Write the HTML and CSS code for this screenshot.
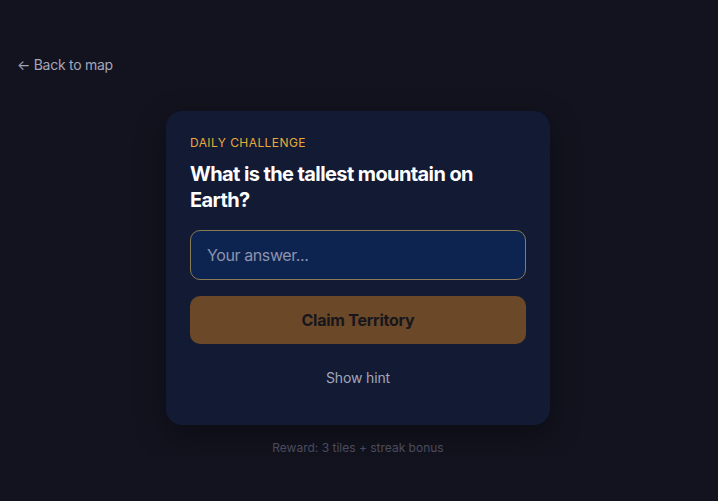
FILE: index.html
```html
<!DOCTYPE html>
<html lang="en">
<head>
    <meta charset="UTF-8">
    <meta name="viewport" content="width=device-width, initial-scale=1.0">
    <title>Daily Challenge</title>
    <link rel="stylesheet" href="styles.css">
</head>
<body>
    <nav class="top-nav">
        <a href="#" class="back-link">&larr; Back to map</a>
    </nav>
    <main class="challenge">
        <section class="challenge-card">
            <p class="challenge-label">DAILY CHALLENGE</p>
            <h2 class="challenge-question">What is the tallest mountain on Earth?</h2>
            <form id="answerForm" class="answer-form">
                <input type="text" id="answer" class="answer-input" placeholder="Your answer..." autofocus>
                <button type="submit" class="claim-btn">Claim Territory</button>
            </form>
            <button type="button" class="hint-btn">Show hint</button>
        </section>
        <p class="reward">Reward: 3 tiles + streak bonus</p>
    </main>
</body>
</html>
```

FILE: styles.css
```css
body {
    font-family: Inter, "Noto Sans", sans-serif;
    background-color: #13131f;
    color: #e8e9f0;
    margin: 0;
    padding: 0;
}

.top-nav {
    padding: 54px 17px 0;
}

.back-link {
    color: #a3a6ba;
    font-size: 14px;
    line-height: 18px;
    letter-spacing: -0.02em;
    text-decoration: none;
}

.challenge {
    display: flex;
    flex-direction: column;
    align-items: center;
    margin-top: 37px;
    padding-right: 2px;
}

.challenge-card {
    box-sizing: border-box;
    width: 384px;
    padding: 24px 24px 29px;
    background-color: #121a34;
    border-radius: 16px;
    box-shadow: 0 10px 30px rgba(0, 0, 0, 0.35);
    display: flex;
    flex-direction: column;
}

.challenge-label {
    margin: 0;
    color: #eaa93b;
    font-size: 12px;
    line-height: 16px;
    letter-spacing: 0.035em;
}

.challenge-question {
    margin: 10px 0 0;
    color: #ffffff;
    font-size: 20px;
    font-weight: 700;
    line-height: 26px;
    letter-spacing: -0.03em;
}

.answer-form {
    display: flex;
    flex-direction: column;
    gap: 16px;
    margin-top: 17px;
}

.answer-input {
    box-sizing: border-box;
    height: 50px;
    padding: 0 16px;
    background-color: #0e2450;
    border: 1px solid #8a7a55;
    border-radius: 10px;
    color: #e8e9f0;
    caret-color: #e8e9f0;
    font-family: inherit;
    font-size: 16px;
    letter-spacing: -0.025em;
    outline: none;
}

.answer-input::placeholder {
    color: #8c93ad;
}

.claim-btn {
    height: 48px;
    background-color: #6a4828;
    color: #17161c;
    border: none;
    border-radius: 10px;
    font-family: inherit;
    font-size: 16px;
    font-weight: 700;
    letter-spacing: -0.015em;
    cursor: pointer;
}

.hint-btn {
    align-self: center;
    margin-top: 16px;
    padding: 8px;
    background: none;
    border: none;
    color: #a3a6ba;
    font-family: inherit;
    font-size: 14px;
    line-height: 20px;
    letter-spacing: -0.01em;
    cursor: pointer;
}

.reward {
    margin: 15px 0 0;
    color: #4a4c5d;
    font-size: 12px;
    line-height: 16px;
}
```
